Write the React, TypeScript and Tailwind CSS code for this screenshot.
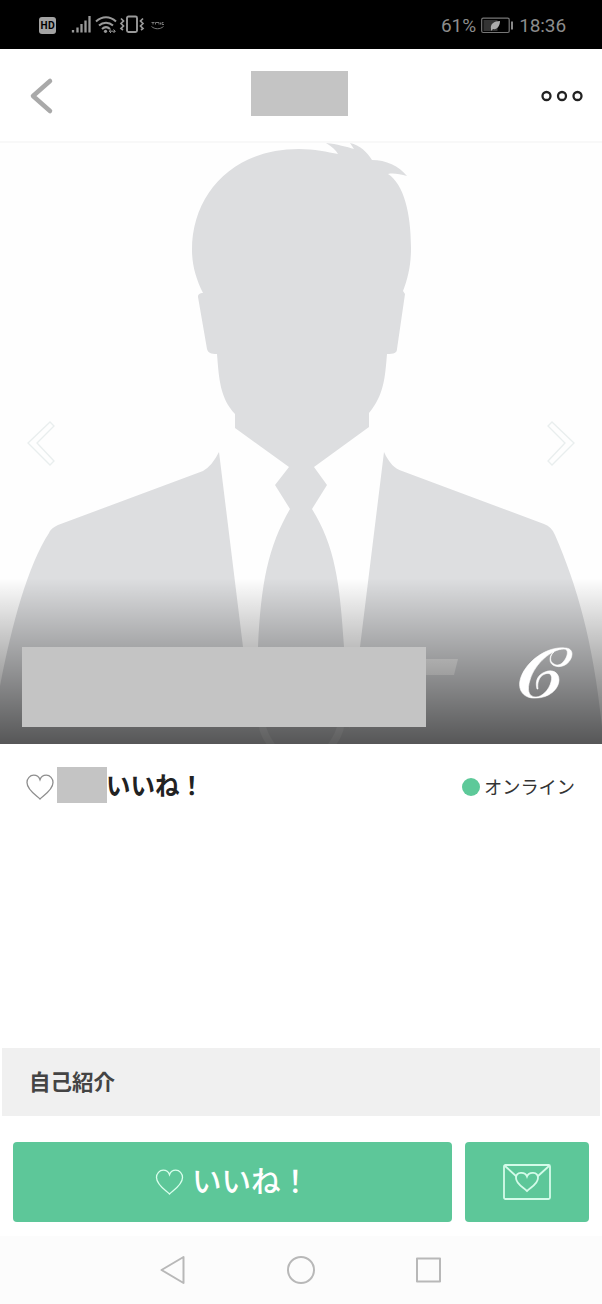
import React from "react";

const HeartIcon = ({ className }: { className?: string }) => (
  <svg viewBox="0 0 28 26" fill="none" stroke="currentColor" strokeWidth="1.300" className={className}>
    <path d="M14 25C10.500 21.500 1 16 1 8.500C1 4.500 4 1.200 7.700 1.200C10.500 1.200 13 2.800 14 5.800C15 2.800 17.500 1.200 20.300 1.200C24 1.200 27 4.500 27 8.500C27 16 17.500 21.500 14 25Z" />
  </svg>
);

const StatusBar = () => (
  <div className="flex h-[49px] shrink-0 items-center bg-black pl-[39px] pr-[37px] pt-px text-[#8c8c8c]">
    <div className="flex h-[17px] w-[17px] items-center justify-center rounded-[3px] bg-[#a3a3a3] text-[10px] font-bold leading-none text-black">
      HD
    </div>
    <svg width="96" height="20" viewBox="0 0 96 20" className="ml-[15px]" fill="none" stroke="#999">
      <path d="M2 17.500V15M6.500 17.500V12.500M10.500 17.500V9M14.500 17.500V5.500M18.500 17.500V1" strokeWidth="2.300" />
      <path d="M25 6.500C31 .7 39 .7 45 6.500M28 10.500C32 6.800 38 6.800 42 10.500M31 14C33.500 11.700 36.500 11.700 39 14" strokeWidth="2" />
      <circle cx="34.500" cy="16.300" r="1.600" fill="#999" stroke="none" />
      <path d="M38.500 16.200H44M40 14.500L38.200 16.200L40 18M42.500 14.500L44.300 16.200L42.500 18" strokeWidth="1" />
      <rect x="56" y="1.500" width="10" height="15.500" rx="1.500" strokeWidth="1.900" />
      <path d="M50 3.500L52.500 6L50 8.500L52.500 11L50 13.500L52 15M72 3.500L69.500 6L72 8.500L69.500 11L72 13.500L70 15" strokeWidth="1.700" />
      <path d="M80.500 7.500H83.500M82 7.500V9.500M84.500 9.500V7.500H88V9.500M89.500 7.500V9.500M92.500 7.500H91V9.500H93M80.500 11.500C84 14.500 89 14.500 92.500 11.500" strokeWidth="1" stroke="#777" />
    </svg>
    <div className="ml-auto flex items-center font-[Roboto,sans-serif] text-[19px] leading-none">
      <span>61%</span>
      <svg width="33" height="17" viewBox="0 0 33 17" className="ml-[5px] mr-[5px]">
        <rect x=".7" y="1.200" width="27.500" height="14.300" rx="1.500" fill="none" stroke="#777" strokeWidth="1.200" />
        <rect x="2.500" y="3" width="14" height="11" fill="#333" />
        <path d="M10 12C9 7 13 4 19 4C19 9 16 13 12 12L10 14Z" fill="#aaa" />
        <path d="M31 4.500V12.500" stroke="#888" strokeWidth="2" />
      </svg>
      <span className="-mr-px tracking-[-0.1px]">18:36</span>
    </div>
  </div>
);

const Header = () => (
  <header className="flex h-[94px] shrink-0 items-center border-b-2 border-[#f8f8f8] bg-white pl-[29px] pr-[19px]">
    <svg width="25" height="38" viewBox="0 0 25 38" fill="none" stroke="#a9a9a9" strokeWidth="4.500" className="mt-px">
      <path d="M21 4L4 19L21 34" strokeLinecap="round" strokeLinejoin="round" />
    </svg>
    <div className="mb-[3px] ml-[197px] h-[45px] w-[97px] bg-[#c4c4c4]" />
    <svg width="42" height="12" viewBox="0 0 42 12" fill="none" stroke="#222" strokeWidth="2.300" className="ml-auto mt-[2px]">
      <circle cx="5.500" cy="6" r="4" />
      <circle cx="21" cy="6" r="4" />
      <circle cx="36.500" cy="6" r="4" />
    </svg>
  </header>
);

const Silhouette = () => (
  <svg width="602" height="601" viewBox="0 143 602 601" className="block" fill="#dddee0">
    <path d="M203 293C196 279 192 265 192 250C192 194 233 149 299 149C314 149 328 152 338 154C336 150 332 147 326 143C337 144 347 147 354 149L350 143C360 145 367 152 372 160C386 160 399 166 407 176C400 174 393 173 388 174C404 184 411 214 411 248C411 265 408 278 403 291L405 294L397 349C397 353 394 354 387 354C385 378 384 395 369 413V427L314 467L327 485L312 509C335 546 340 583 344 647L350 744H250L258 647C261 583 268 547 290 509L275 485L289 467L235 428V414C220 398 219 379 217 354C211 354 208 353 207 349L198 297C198 294 200 293 203 293Z" />
    <path d="M219 452L243 647L255 744H0V686C12 624 28 565 49 533Q51 528 58 525L203 471Q212 466 219 452Z" />
    <path d="M384 452C389 463 395 469 402 471L544 524Q552 527 555 535C577 586 593 640 602 727V744H347L360 647Z" />
    <path d="M262 724C263 733 267 739 272 746M341 724C340 733 336 739 331 746" fill="none" stroke="#fff" strokeWidth="7" opacity=".5" />
    <path d="M400 659H458L454 675H400Z" fill="#fff" opacity=".75" />
  </svg>
);

const LogoMark = () => (
  <svg width="54" height="54" viewBox="0 0 54 54" fill="#fff" stroke="#fff" strokeWidth=".6">
    <path d="M35 4.500C30 8 29 17 36 19C45 22 53 14 53 7C53 3 50 1 46 1C28-1 8 14 2 30C-3 44 6 52 17 51C30 51 40 42 40 33C40 25 33 22 26 25C18 28 16 35 18 42L19 42C18 36 20 29 26 27C31 25 34 28 32 35C30 43 23 50 17 50C9 50 8 42 11 33C16 16 33 2 45 2C50 2 49 9 45 14C42 18 38 19 35 17C30 15 31 8 35 5Z" />
  </svg>
);

const Photo = () => (
  <section className="relative h-[601px] shrink-0 overflow-hidden bg-[#fefefe]">
    <Silhouette />
    <div className="absolute inset-x-0 bottom-0 h-[166px] bg-linear-to-b from-transparent to-black/61" />
    <svg width="30" height="46" viewBox="0 0 30 46" fill="none" stroke="#e9eeee" strokeWidth="1.300" className="absolute left-[27px] top-[278px]">
      <path d="M23 1L1 22L23 44L27 40L10 22L27 5Z" />
    </svg>
    <svg width="30" height="46" viewBox="0 0 30 46" fill="none" stroke="#e9eeee" strokeWidth="1.300" className="absolute right-[27px] top-[278px]">
      <path d="M7 1L29 22L7 44L3 40L20 22L3 5Z" />
    </svg>
    <div className="absolute bottom-[17px] left-[22px] h-[80px] w-[404px] bg-[#c4c4c4]" />
    <div className="absolute bottom-[43px] left-[519px]">
      <LogoMark />
    </div>
  </section>
);

const Profile = () => (
  <section className="flex h-[304px] shrink-0 items-start justify-between bg-white pl-[26px] pr-[27px] pt-[23px]">
    <div className="flex h-[36px] items-center">
      <HeartIcon className="mt-[4px] h-[26px] w-[28px] text-[#8e8e8e]" />
      <div className="ml-[3px] h-[36px] w-[50px] bg-[#c4c4c4]" />
      <span className="-ml-px mt-px text-[24.500px] font-bold leading-none text-[#222]">いいね！</span>
    </div>
    <div className="flex h-[40px] items-center">
      <span className="h-[18px] w-[18px] rounded-full bg-[#5dc999]" />
      <span className="-mt-px ml-[4px] text-[18.200px] leading-none text-[#333]">オンライン</span>
    </div>
  </section>
);

const Actions = () => (
  <div className="flex h-[120px] shrink-0 gap-[13px] bg-white pb-[14px] pl-[13px] pr-[13px] pt-[26px]">
    <button className="flex flex-1 items-center justify-center rounded-[4px] bg-[#5dc799] text-white">
      <HeartIcon className="mr-[8px] h-[26px] w-[29px] text-[#d9ffed]" />
      <span className="-mt-[5px] text-[29.500px] font-medium leading-none">いいね！</span>
    </button>
    <button className="flex w-[124px] items-center justify-center rounded-[4px] bg-[#5dc799]">
      <svg width="48" height="36" viewBox="0 0 48 36" fill="none" stroke="#d4fbe9" strokeWidth="1.800">
        <rect x="1" y="1" width="46" height="34" rx="1.500" />
        <path d="M2 2L13.500 12.500M46 2L34.500 12.500" />
        <path d="M24 27C20 23 13 20 13 14C13 7.500 22 7.500 24 12.500C26 7.500 35 7.500 35 14C35 20 28 23 24 27Z" />
      </svg>
    </button>
  </div>
);

const NavBar = () => (
  <nav className="flex h-[68px] shrink-0 items-center bg-[#fcfcfc] pl-[160px]">
    <svg width="282" height="30" viewBox="0 0 282 30" fill="none" stroke="#b8b8b8" strokeWidth="2" strokeLinejoin="round">
      <path d="M1.500 15L23.500 2V28Z" />
      <circle cx="141" cy="15" r="13" />
      <rect x="257" y="3.500" width="23" height="23" />
    </svg>
  </nav>
);

export default function App() {
  return (
    <main className="flex h-[1304px] w-[602px] flex-col overflow-hidden bg-white font-['Noto_Sans_CJK_JP',sans-serif]">
      <StatusBar />
      <Header />
      <Photo />
      <Profile />
      <h2 className="mx-[2px] flex h-[68px] shrink-0 items-center bg-[#f0f0f0] pb-[2px] pl-[27px] text-[21.500px] font-bold leading-none text-[#444]">
        自己紹介
      </h2>
      <Actions />
      <NavBar />
    </main>
  );
}
